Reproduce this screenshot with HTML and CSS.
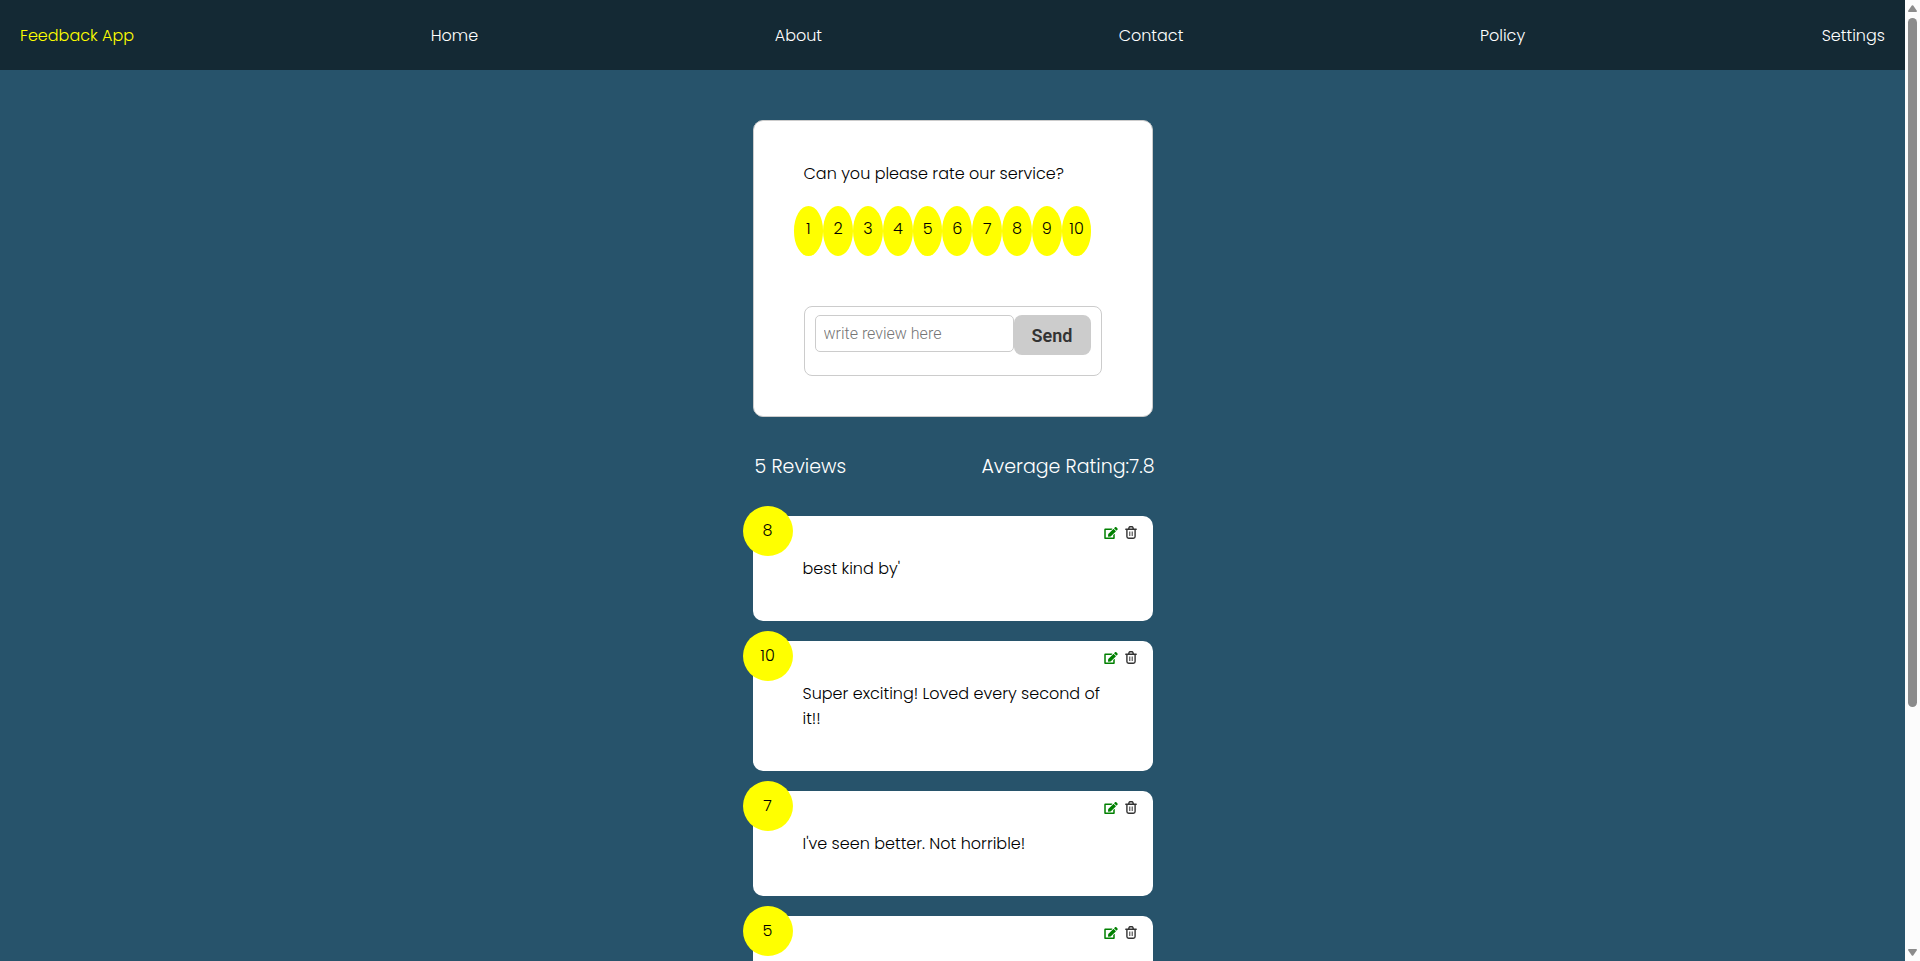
FILE: index.html
```html
<!DOCTYPE html>
<html lang="en">
<head>
<meta charset="utf-8">
<title>Feedback App</title>
<link rel="stylesheet" href="styles.css">
</head>
<body>
<svg class="sprite" aria-hidden="true">
  <symbol id="edit" viewBox="0 0 576 512"><path d="M402.600 83.200l90.200 90.200c3.800 3.800 3.800 10 0 13.800L274.400 405.600l-92.800 10.300c-12.400 1.400-22.900-9.100-21.500-21.500l10.300-92.800L388.800 83.200c3.800-3.800 10-3.800 13.800 0zm162-22.900l-48.800-48.800c-15.200-15.200-39.900-15.200-55.200 0l-35.400 35.400c-3.800 3.800-3.800 10 0 13.800l90.200 90.200c3.800 3.800 10 3.800 13.800 0l35.400-35.400c15.200-15.300 15.200-40 0-55.200zM384 346.200V448H64V128h229.800c3.200 0 6.200-1.300 8.500-3.500l40-40c7.600-7.600 2.200-20.500-8.500-20.500H48C21.500 64 0 85.500 0 112v352c0 26.500 21.500 48 48 48h352c26.500 0 48-21.500 48-48V306.200c0-10.700-12.900-16-20.500-8.500l-40 40c-2.200 2.300-3.500 5.300-3.500 8.500z"/></symbol>
  <symbol id="trash" viewBox="0 0 12 13"><g fill="none" stroke="currentColor" stroke-linecap="round" stroke-linejoin="round"><path stroke-width="1.400" d="M.8 3.300h10.400M1.900 3.500v7.100q0 1.700 1.700 1.700h4.800q1.700 0 1.700-1.700V3.500M3.500 3.200L4.200 1.300Q4.400.8 5 .8h2q.6 0 .8.500l.7 1.900"/><path stroke-width="1" stroke-linecap="butt" d="M4.800 5.500v4.500M7.200 5.500v4.500"/></g></symbol>
</svg>
<div class="window">
  <div class="page">
    <nav class="navbar">
      <a class="brand" href="#">Feedback App</a>
      <a href="#">Home</a>
      <a href="#">About</a>
      <a href="#">Contact</a>
      <a href="#">Policy</a>
      <a href="#">Settings</a>
    </nav>
    <main class="content">
      <section class="rate-card">
        <p class="question">Can you please rate our service?</p>
        <div class="ratings">
          <button type="button">1</button>
          <button type="button">2</button>
          <button type="button">3</button>
          <button type="button">4</button>
          <button type="button">5</button>
          <button type="button">6</button>
          <button type="button">7</button>
          <button type="button">8</button>
          <button type="button">9</button>
          <button type="button">10</button>
        </div>
        <form class="review-form">
          <input type="text" placeholder="write review here" aria-label="write review here">
          <button type="button">Send</button>
        </form>
      </section>
      <div class="stats">
        <span>5 Reviews</span>
        <span>Average Rating:7.8</span>
      </div>
      <section class="reviews">
        <article class="review">
          <span class="score">8</span>
          <div class="actions">
            <button type="button" class="edit" aria-label="Edit"><svg width="14" height="12"><use href="#edit"/></svg></button>
            <button type="button" class="remove" aria-label="Delete"><svg width="12" height="13"><use href="#trash"/></svg></button>
          </div>
          <p>best kind by'</p>
        </article>
        <article class="review">
          <span class="score">10</span>
          <div class="actions">
            <button type="button" class="edit" aria-label="Edit"><svg width="14" height="12"><use href="#edit"/></svg></button>
            <button type="button" class="remove" aria-label="Delete"><svg width="12" height="13"><use href="#trash"/></svg></button>
          </div>
          <p>Super exciting! Loved every second of it!!</p>
        </article>
        <article class="review">
          <span class="score">7</span>
          <div class="actions">
            <button type="button" class="edit" aria-label="Edit"><svg width="14" height="12"><use href="#edit"/></svg></button>
            <button type="button" class="remove" aria-label="Delete"><svg width="12" height="13"><use href="#trash"/></svg></button>
          </div>
          <p>I've seen better. Not horrible!</p>
        </article>
        <article class="review">
          <span class="score">5</span>
          <div class="actions">
            <button type="button" class="edit" aria-label="Edit"><svg width="14" height="12"><use href="#edit"/></svg></button>
            <button type="button" class="remove" aria-label="Delete"><svg width="12" height="13"><use href="#trash"/></svg></button>
          </div>
        </article>
      </section>
    </main>
  </div>
  <div class="scrollbar" aria-hidden="true">
    <svg width="9" height="7" viewBox="0 0 9 7"><path d="M3.800.6Q4.500-.2 5.200.6L9 6Q9 7 8 7H1Q0 7 0 6z"/></svg>
    <div class="track"><div class="thumb"></div></div>
    <svg width="9" height="7" viewBox="0 0 9 7"><path d="M3.800 6.400Q4.500 7.200 5.200 6.400L9 1Q9 0 8 0H1Q0 0 0 1z"/></svg>
  </div>
</div>
</body>
</html>
```
FILE: styles.css
```css
* { box-sizing: border-box; margin: 0; padding: 0; }

body {
  font-family: Poppins, Inter, "Open Sans", sans-serif;
  font-weight: 300;
  font-size: 16px;
  line-height: 25px;
  color: #000;
  background: #27536b;
}

button, input { font: inherit; color: inherit; border: 0; }
button { cursor: pointer; background: none; }

.sprite { position: absolute; width: 0; height: 0; }

.window { display: flex; height: 100vh; }

.page {
  flex: 1;
  overflow-y: auto;
  scrollbar-width: none;
}

.navbar {
  display: flex;
  justify-content: space-between;
  align-items: center;
  height: 70px;
  padding: 0 20px;
  background: #142934;
}
.navbar a { color: #fff; text-decoration: none; }
.navbar .brand { color: #ff0; }

.content {
  width: 400px;
  max-width: 100%;
  margin: 50px auto 20px;
}

.rate-card {
  padding: 40px 50px;
  background: #fff;
  border: 1px solid #ccc;
  border-radius: 10px;
}

.ratings {
  display: flex;
  margin: 20px 10px 50px -10px;
}
.ratings button {
  flex: 1;
  height: 50px;
  padding-bottom: 6px;
  text-align: center;
  background: #ff0;
  border-radius: 50%;
}

.review-form {
  display: flex;
  align-items: flex-start;
  height: 70px;
  padding: 8px 10px;
  border: 1px solid #ccc;
  border-radius: 8px;
}
.review-form input {
  flex: 1;
  min-width: 0;
  height: 37px;
  padding: 0 8px;
  font-family: Roboto, sans-serif;
  font-size: 16px;
  background: #fff;
  border: 1px solid #ccc;
  border-radius: 5px;
}
.review-form input::placeholder { color: #757575; }
.review-form button {
  width: 77px;
  height: 40px;
  font-family: Roboto, sans-serif;
  font-size: 18px;
  font-weight: 600;
  color: #333;
  background: #ccc;
  border-radius: 8px;
}

.stats {
  display: flex;
  justify-content: space-between;
  margin-right: -2px;
  padding: 35px 0 34px 2px;
  font-size: 19px;
  line-height: 30px;
  color: #fff;
}

.reviews { display: grid; gap: 20px; }

.review {
  position: relative;
  min-height: 105px;
  padding: 40px 50px;
  background: #fff;
  border-radius: 10px;
}

.score {
  position: absolute;
  top: -10px;
  left: -10px;
  width: 50px;
  height: 50px;
  line-height: 50px;
  text-align: center;
  background: #ff0;
  border-radius: 50%;
}

.actions {
  position: absolute;
  top: 10px;
  right: 16px;
  display: flex;
  align-items: center;
  gap: 7px;
}
.actions button { display: flex; }
.actions svg { fill: currentColor; }
.edit { color: #008000; }
.remove { color: #333; }

.scrollbar {
  display: flex;
  flex-direction: column;
  align-items: center;
  width: 15px;
  padding: 5px 0;
  background: #fcfcfc;
}
.scrollbar svg { fill: #8b8b8b; }
.track { flex: 1; padding: 6px 0; }
.thumb {
  width: 9px;
  height: 74.5%;
  background: #8b8b8b;
  border-radius: 5px;
}
```
